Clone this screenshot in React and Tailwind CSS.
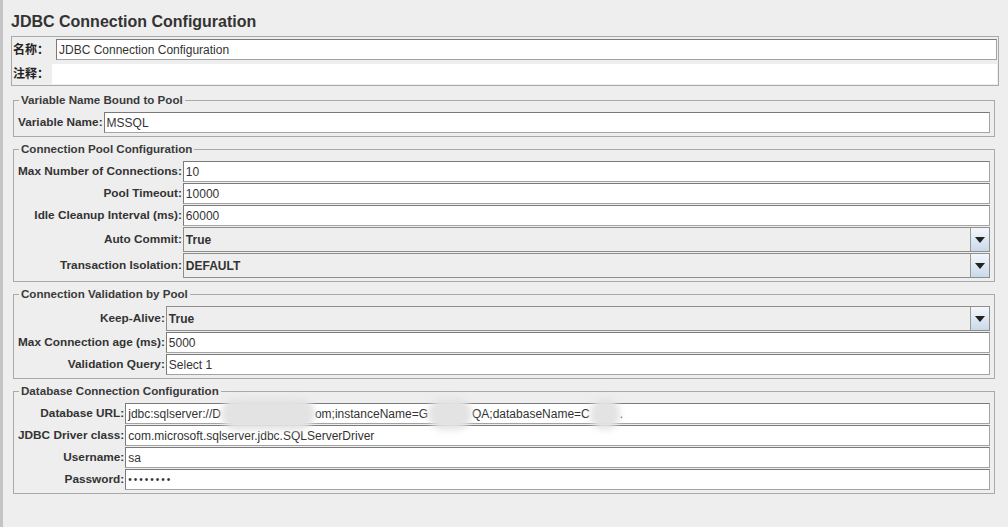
import React from "react";

const FONT = { fontFamily: '"Liberation Sans", Arial, "Noto Sans CJK SC", sans-serif' };

const TextField = ({ value, children }) => (
  <div className="h-[21px] bg-white border border-[#a3a3a3] border-t-[#7a7a7a] border-l-[#7a7a7a] flex items-center pl-[2px] text-[12px] text-[#333] whitespace-nowrap overflow-visible">
    {children || value}
  </div>
);

const Combo = ({ value }) => (
  <div className="h-[25px] flex border border-[#8e8e8e] bg-[#eeeeee]">
    <div className="flex-1 flex items-center pl-[2px] text-[12px] font-bold text-[#333] border-r border-[#9a9a9a]">
      {value}
    </div>
    <div className="w-[18px] flex items-center justify-center bg-gradient-to-b from-[#f4f7fb] to-[#c9d9ea]">
      <svg width="10" height="6" viewBox="0 0 10 6">
        <path d="M0 0 L10 0 L5 6 Z" fill="#222" />
      </svg>
    </div>
  </div>
);

const Group = ({ title, rows }) => (
  <fieldset className="mx-[13px] border border-[#a9a9a9] pl-[4px] pr-[4px] pt-[5px] pb-[3px]">
    <legend className="ml-[1px] px-[2px] h-[14px] text-[11.6px] font-bold text-[#3a3a3a] leading-[14px]">{title}</legend>
    <div className="grid grid-cols-[auto_1fr] gap-y-[1px] items-center">
      {rows.map((r) => (
        <React.Fragment key={r.label}>
          <div className="text-right text-[11.8px] font-bold text-[#333] pr-[1px] whitespace-nowrap">{r.label}</div>
          {r.combo ? <Combo value={r.value} /> : <TextField value={r.value}>{r.children}</TextField>}
        </React.Fragment>
      ))}
    </div>
  </fieldset>
);

const Blob = ({ w }) => (
  <span className={`inline-block h-[32px] -my-[6px] rounded-full bg-[#e3e3e3] blur-[3px] ${w}`} />
);

export default function App() {
  const dbUrl = (
    <span className="flex items-center">
      <span>jdbc:sqlserver://D</span>
      <Blob w="w-[94px]" />
      <span>om;instanceName=G</span>
      <Blob w="w-[44px]" />
      <span>QA;databaseName=C</span>
      <Blob w="w-[30px]" />
      <span>.</span>
    </span>
  );

  return (
    <div style={FONT} className="w-[1008px] h-[527px] bg-[#eeeeee] border-l-[3px] border-[#c4c4c4] overflow-hidden">
      <div className="pl-[8px] pt-[12px] h-[36px] text-[16px] font-bold text-[#333] leading-[19px]">
        JDBC Connection Configuration
      </div>

      <div className="ml-[8px] mr-[9px] border border-[#a9a9a9] px-[1px] pt-[2px] pb-[1px] flex flex-col gap-[4px]">
        <div className="flex items-center">
          <span className="w-[43px] text-[12px] font-bold text-[#222]">名称：</span>
          <div className="flex-1">
            <TextField value="JDBC Connection Configuration" />
          </div>
        </div>
        <div className="flex items-center">
          <span className="w-[39px] text-[12px] font-bold text-[#222]">注释：</span>
          <div className="flex-1 h-[20px] bg-white" />
        </div>
      </div>

      <div className="flex flex-col gap-[5px] mt-[7px] -ml-[3px]">
        <Group title="Variable Name Bound to Pool" rows={[{ label: "Variable Name:", value: "MSSQL" }]} />
        <Group
          title="Connection Pool Configuration"
          rows={[
            { label: "Max Number of Connections:", value: "10" },
            { label: "Pool Timeout:", value: "10000" },
            { label: "Idle Cleanup Interval (ms):", value: "60000" },
            { label: "Auto Commit:", value: "True", combo: true },
            { label: "Transaction Isolation:", value: "DEFAULT", combo: true },
          ]}
        />
        <Group
          title="Connection Validation by Pool"
          rows={[
            { label: "Keep-Alive:", value: "True", combo: true },
            { label: "Max Connection age (ms):", value: "5000" },
            { label: "Validation Query:", value: "Select 1" },
          ]}
        />
        <Group
          title="Database Connection Configuration"
          rows={[
            { label: "Database URL:", children: dbUrl },
            { label: "JDBC Driver class:", value: "com.microsoft.sqlserver.jdbc.SQLServerDriver" },
            { label: "Username:", value: "sa" },
            { label: "Password:", children: <span className="text-[10px] tracking-[2px]">••••••••</span> },
          ]}
        />
      </div>
    </div>
  );
}
